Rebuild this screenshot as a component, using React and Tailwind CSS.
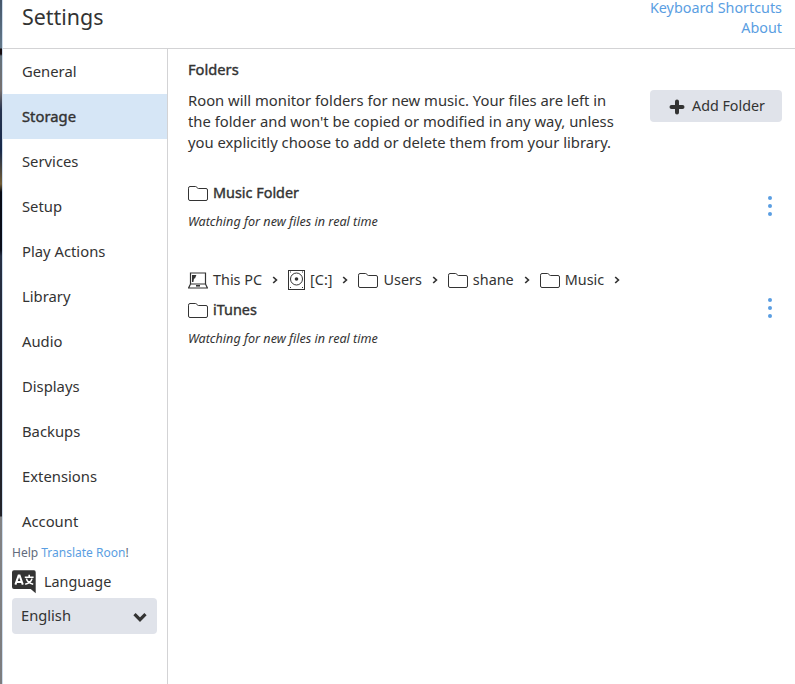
import React, { useState } from 'react';

const NAV_ITEMS = [
  'General',
  'Storage',
  'Services',
  'Setup',
  'Play Actions',
  'Library',
  'Audio',
  'Displays',
  'Backups',
  'Extensions',
  'Account',
];

function FolderIcon() {
  return (
    <svg width="20" height="15" viewBox="0 0 20 15" fill="none" stroke="#333" strokeWidth="1" className="mt-px shrink-0">
      <path d="M.5 2.2Q.5.5 2 .5H7.6Q8.6.5 9 1.5Q9.4 2.5 10.5 2.5H18Q19.5 2.5 19.5 4V13Q19.5 14.5 18 14.5H2Q.5 14.5.5 13Z" />
    </svg>
  );
}

function ComputerIcon() {
  return (
    <svg width="20" height="17" viewBox="0 0 20 17" fill="none" stroke="#333" className="shrink-0">
      <path d="M2.5 12V1H17.5V12" strokeWidth="1.2" />
      <path d="M2.5 12H17.5L19.4 16H.6Z" strokeWidth="1.2" />
      <path d="M4 3H8.4L7 6.5H6L5.4 10H4Z" fill="#333" stroke="none" />
      <path d="M8 13H12V14.6H8Z" fill="#333" stroke="none" />
    </svg>
  );
}

function DriveIcon() {
  return (
    <svg width="17" height="20" viewBox="0 0 17 20" fill="none" stroke="#333" className="shrink-0">
      <rect x=".5" y=".5" width="16" height="19" />
      <circle cx="8.5" cy="9" r="6" />
      <circle cx="8.5" cy="9" r="1.8" fill="#333" stroke="none" />
      <path d="M2 2h1M14 2h1M2 17.5h1M14 17.5h1" />
    </svg>
  );
}

function Separator() {
  return (
    <svg width="6" height="8" viewBox="0 0 6 8" fill="none" stroke="#333" strokeWidth="1.7" className="mx-[10px] shrink-0">
      <path d="M1.2 1 4.4 4 1.2 7" />
    </svg>
  );
}

function TranslateIcon() {
  return (
    <svg width="24" height="24" viewBox="0 0 24 24" className="shrink-0">
      <path d="M2 .3H22Q23.7 .3 23.7 2.3V23.2L18.7 19H2Q0 19 0 17V2.3Q0 .3 2 .3Z" fill="#333" />
      <g fill="none" stroke="#fff" strokeWidth="2">
        <path d="M3.4 14.6 6.6 5.6H7.6L10.8 14.6M4.8 12H9.4" />
        <path d="M12.8 7.2H21.6M17.2 4.8V7.2M14.4 8.6Q15.4 12.8 21.2 14.2M20 8.6Q19 12.8 13.2 14.2" strokeWidth="1.6" />
      </g>
    </svg>
  );
}

function MoreButton() {
  return (
    <button className="mt-[2px] mr-[10px] flex shrink-0 flex-col gap-1" aria-label="More">
      <span className="size-1 rounded-full bg-[#5a9ee2]" />
      <span className="size-1 rounded-full bg-[#5a9ee2]" />
      <span className="size-1 rounded-full bg-[#5a9ee2]" />
    </button>
  );
}

function Crumb({ icon, label, bold }) {
  return (
    <div className="flex h-[30px] items-center">
      {icon}
      <span className={`ml-[5px] leading-[22px] ${bold ? '[-webkit-text-stroke:0.4px_#333]' : ''}`}>{label}</span>
      {!bold && <Separator />}
    </div>
  );
}

export default function App() {
  const [active, setActive] = useState('Storage');

  return (
    <div className="flex h-[684px] w-[795px] overflow-hidden bg-white font-['Noto_Sans',sans-serif] text-[#333]">
      {/* Sliver of the window behind */}
      <div className="w-0.5 shrink-0 bg-[linear-gradient(#45566a_0,#64798a_48px,#170d10_49px,#170d10_54px,#62717c_56px,#77706e_90px,#26334f_110px,#17294a_150px,#735d35_184px,#070a14_192px,#0a0d1a_250px,#273044_256px,#1e202c_400px,#232329_516px,#828284_517px,#7c7c7e_684px)]" />
      <div className="w-px shrink-0 bg-[#cddcec]" />

      <div className="flex min-w-0 grow flex-col">
        <header className="flex h-[49px] shrink-0 justify-between border-b border-[#d3d3d5] pr-[13px] pl-[19px]">
          <h1 className="mt-[2px] text-[21.4px] leading-[30px]">Settings</h1>
          <div className="-mt-[2px] flex flex-col text-right text-[14.35px] leading-5 text-[#5a9ee2]">
            <a href="#shortcuts">Keyboard Shortcuts</a>
            <a href="#about">About</a>
          </div>
        </header>

        <div className="flex min-h-0 grow">
          <aside className="w-[165px] shrink-0 border-r border-[#d3d3d5]">
            <nav>
              {NAV_ITEMS.map((item) => (
                <button
                  key={item}
                  onClick={() => setActive(item)}
                  className={`flex h-[45px] w-full items-center pl-[19px] text-[14.8px] ${
                    item === active ? 'bg-[#d6e6f6] [-webkit-text-stroke:0.4px_#333]' : ''
                  }`}
                >
                  {item}
                </button>
              ))}
            </nav>
            <div className="pr-[10px] pl-[9px]">
              <p className="text-[12px] leading-[17px] text-[#626b7d]">
                Help <a href="#translate" className="text-[#5a9ee2]">Translate Roon</a>!
              </p>
              <div className="mt-[9px] flex h-6 items-center gap-2 text-[14.4px]">
                <TranslateIcon />
                Language
              </div>
              <button className="mt-[4px] flex h-9 w-full items-center justify-between rounded bg-[#e0e3ea] pr-[10px] pb-[2px] pl-[9px] text-[14.7px]">
                English
                <svg width="14" height="9" viewBox="0 0 14 9" fill="none" stroke="#333" strokeWidth="3.2" className="mt-[4px]">
                  <path d="M1.5 1.2 7 6.7 12.5 1.2" />
                </svg>
              </button>
            </div>
          </aside>

          <main className="grow pt-[10px] pr-[13px] pl-5">
            <h2 className="text-[14.7px] leading-[21px] [-webkit-text-stroke:0.4px_#333]">Folders</h2>
            <div className="mt-[10px] flex items-start justify-between">
              <p className="w-[440px] text-[14.8px] leading-[21px]">
                Roon will monitor folders for new music. Your files are left in
                <br />
                the folder and won't be copied or modified in any way, unless
                <br />
                you explicitly choose to add or delete them from your library.
              </p>
              <button className="flex h-8 w-[132px] shrink-0 items-center rounded bg-[#e0e3ea] pl-[19px] text-[14.3px]">
                <svg width="16" height="16" viewBox="0 0 16 16" className="mt-px mr-[7px]" stroke="#333" strokeWidth="4" strokeLinecap="round">
                  <path d="M8 2.5V13.5M2.5 8H13.5" />
                </svg>
                Add Folder
              </button>
            </div>

            <div className="mt-[25px] flex items-center justify-between">
              <div>
                <div className="text-[14.4px]">
                  <Crumb icon={<FolderIcon />} label="Music Folder" bold />
                </div>
                <p className="mt-[4px] text-[12.6px] leading-[20px] italic">Watching for new files in real time</p>
              </div>
              <MoreButton />
            </div>

            <div className="mt-[33px] flex items-center justify-between">
              <div>
                <div className="flex w-[450px] flex-wrap text-[14.4px]">
                  <Crumb icon={<ComputerIcon />} label="This PC" />
                  <Crumb icon={<DriveIcon />} label="[C:]" />
                  <Crumb icon={<FolderIcon />} label="Users" />
                  <Crumb icon={<FolderIcon />} label="shane" />
                  <Crumb icon={<FolderIcon />} label="Music" />
                  <Crumb icon={<FolderIcon />} label="iTunes" bold />
                </div>
                <p className="mt-[4px] text-[12.6px] leading-[20px] italic">Watching for new files in real time</p>
              </div>
              <MoreButton />
            </div>
          </main>
        </div>
      </div>
    </div>
  );
}
